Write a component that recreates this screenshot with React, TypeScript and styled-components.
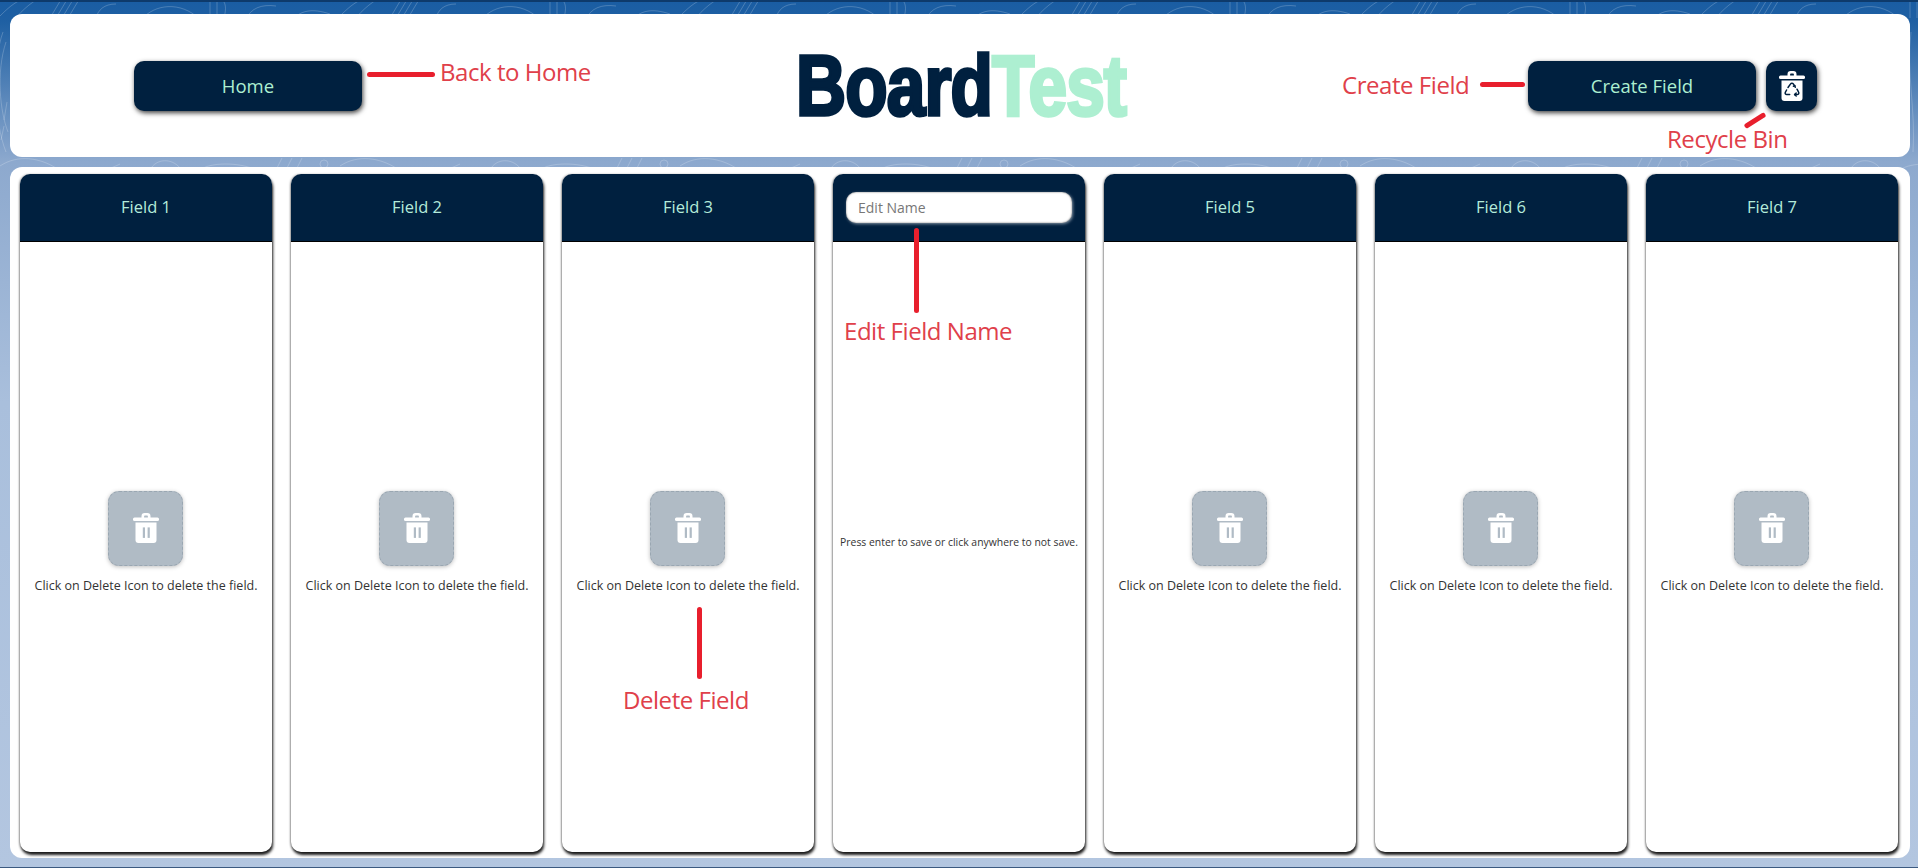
import React from "react";
import styled, { createGlobalStyle } from "styled-components";

const Global = createGlobalStyle`
  html, body { margin: 0; padding: 0; height: 100%; overflow: hidden; }
  body { font-family: "Open Sans", "Noto Sans", sans-serif; }
  * { box-sizing: border-box; }
`;

const Page = styled.div`
  position: relative;
  width: 1918px;
  height: 868px;
  padding: 14px 8px 9px 10px;
  display: flex;
  flex-direction: column;
  gap: 10px;
  overflow: hidden;
  background: linear-gradient(180deg, #1a5da3 0px, #1f60a3 20px, #8da9ce 160px, #a9bfdc 400px, #b3c6e0 867px);
  border-top: 2px solid #0e3a6b;
  border-bottom: 1px solid #3c5a80;
`;

const Topo = styled.svg`
  position: absolute;
  inset: 0;
  width: 100%;
  height: 100%;
  pointer-events: none;
`;

const Header = styled.header`
  position: relative;
  height: 143px;
  margin-top: -2px;
  flex: none;
  background: #fff;
  border-radius: 12px;
  display: grid;
  grid-template-columns: 1fr 329px 1fr;
  align-items: center;
`;

const HeaderLeft = styled.div`
  display: flex;
  padding-left: 124px;
`;

const HeaderRight = styled.div`
  display: flex;
  justify-content: flex-end;
  gap: 10px;
  padding-right: 93px;
`;

const NavButton = styled.button`
  width: 228px;
  height: 50px;
  border: none;
  border-radius: 10px;
  background: #00203f;
  color: #adefd1;
  font: 400 18.5px "Open Sans", sans-serif;
  padding-top: 1px;
  box-shadow: 1px 2px 5px rgba(0, 0, 0, 0.75);
`;

const BinButton = styled.button`
  width: 51px;
  height: 50px;
  border: none;
  border-radius: 10px;
  background: #00203f;
  display: grid;
  place-items: center;
  padding: 0;
  box-shadow: 1px 2px 5px rgba(0, 0, 0, 0.75);
`;

const Logo = styled.h1`
  margin: 0;
  font: 700 85px/1 "Liberation Sans", sans-serif;
  letter-spacing: -1px;
  white-space: nowrap;
  color: #00203f;
  -webkit-text-stroke: 3.5px currentColor;
  transform: scaleX(0.815);
  transform-origin: left center;
`;

const LogoAccent = styled.span`
  color: #adefd1;
`;

const Board = styled.main`
  position: relative;
  flex: 1;
  background: #fff;
  border-radius: 12px;
  padding: 7px 12px 6px 10px;
  display: grid;
  grid-template-columns: repeat(7, 1fr);
  column-gap: 19px;
`;

const Column = styled.section`
  display: flex;
  flex-direction: column;
  border-radius: 10px;
  background: #fff;
  overflow: hidden;
  box-shadow: 1px 3px 3px rgba(0, 0, 0, 0.9), -1px 0 2px rgba(0, 0, 0, 0.3);
`;

const ColumnHead = styled.div`
  height: 68px;
  flex: none;
  background: #00203f;
  border-bottom: 1px solid #000;
  color: #b4ebdb;
  font-size: 16.5px;
  display: flex;
  align-items: center;
  justify-content: center;
  padding-bottom: 2px;
`;

const NameInput = styled.input`
  width: 226px;
  height: 31px;
  margin-top: 2px;
  border: none;
  border-radius: 10px;
  padding: 0 12px;
  background: #fff;
  font: 400 14px "Open Sans", sans-serif;
  box-shadow: 1px 1px 3px rgba(255, 255, 255, 0.5), inset 0 0 2px rgba(0, 0, 0, 0.6);
  &::placeholder { color: #777; opacity: 1; }
`;

const ColumnBody = styled.div`
  flex: 1;
  display: flex;
  flex-direction: column;
  align-items: center;
  justify-content: center;
  gap: 11px;
  padding-bottom: 10px;
`;

const DeleteTile = styled.button`
  width: 75px;
  height: 75px;
  padding: 0;
  margin-right: 1px;
  border: 1px dashed #9aa7b2;
  border-radius: 11px;
  background: #b0bbc5;
  display: grid;
  place-items: center;
  box-shadow: 0 1px 4px rgba(0, 0, 0, 0.25);
`;

const Hint = styled.p<{ $small?: boolean }>`
  margin: 0;
  color: #333;
  white-space: nowrap;
  font-size: ${(p) => (p.$small ? "10.4px" : "12.5px")};
`;

const Note = styled.span`
  position: absolute;
  color: #e0404a;
  font: 400 24px/1 "Open Sans", sans-serif;
  letter-spacing: -0.45px;
  white-space: nowrap;
`;

const Stroke = styled.i`
  position: absolute;
  background: #e81f2d;
  border-radius: 3px;
`;

const TrashIcon = ({ recycle }: { recycle?: boolean }) => (
  <svg width="26" height="30" viewBox="0 0 26 30" fill="#fff">
    <path d="M8.5 5V3.2A3.2 3.2 0 0 1 11.7 0h2.6a3.2 3.2 0 0 1 3.2 3.2V5h-2.6V3.4a.8.8 0 0 0-.8-.8h-2.2a.8.8 0 0 0-.8.8V5z" />
    <rect x="0" y="4.6" width="26" height="3.4" rx="1.5" />
    <path d="M2.5 9.4h21V27a3 3 0 0 1-3 3h-15a3 3 0 0 1-3-3z" />
    {recycle ? (
      <g fill="none" stroke="#00203f" strokeWidth="1.5" strokeLinecap="round" strokeLinejoin="round">
        <path d="M9 16.5l2.6-3.6a1.6 1.6 0 0 1 2.7 0l1.2 1.8" />
        <path d="M14.4 15.2l1.5-.6.4 1.7" />
        <path d="M18 18.2l1.6 3a1.6 1.6 0 0 1-1.4 2.4h-2.4" />
        <path d="M17.2 22l-1.6 1.6 1.6 1.4" />
        <path d="M7.6 19l-1.3 2.3a1.6 1.6 0 0 0 1.4 2.3h3" />
      </g>
    ) : (
      <g fill="#b0bbc5">
        <rect x="9.8" y="14.4" width="2.2" height="10.5" />
        <rect x="14.6" y="14.4" width="2.2" height="10.5" />
      </g>
    )}
  </svg>
);

const names = ["Field 1", "Field 2", "Field 3", null, "Field 5", "Field 6", "Field 7"];

const contours = [
  "M0 14C12 2 22 -6 36 -4",
  "M12 20C24 6 34 -2 44 -6",
  "M50 16L62 -4M56 16L68 -4M62 16L74 -4M68 16L80 -4",
  "M96 16C98 8 104 2 116 2",
  "M140 20C150 4 176 -2 196 14",
  "M210 16V0M217 16V0M224 16C226 8 226 4 224 0M246 18C250 6 262 2 276 4",
  "M290 20C300 8 312 6 330 12",
  "M0 164C18 152 40 156 56 166S100 172 120 162",
  "M150 168C156 156 172 156 180 166",
  "M200 168C210 160 240 160 256 168",
  "M276 168L282 156M286 168L292 156M296 168L302 156",
  "M320 162a4 4 0 1 0 8 0a4 4 0 1 0-8 0",
];

const SideLines = [
  "M6 40C-4 70 0 110 8 130",
  "M3 30C-8 60 -6 120 6 150",
  "M7 100L4 118M4 124L1 138",
  "M1911 30C1906 70 1916 110 1913 150",
];

export default function App() {
  return (
    <Page>
      <Global />
      <Topo aria-hidden="true">
        <defs>
          <pattern id="topo" width="340" height="180" patternUnits="userSpaceOnUse">
            <g fill="none" stroke="#fff" strokeOpacity="0.2" strokeWidth="1">
              {contours.map((d) => (
                <path key={d} d={d} />
              ))}
            </g>
          </pattern>
        </defs>
        <rect x="0" y="0" width="1918" height="178" fill="url(#topo)" />
        <g fill="none" stroke="#fff" strokeOpacity="0.2" strokeWidth="1">
          {SideLines.map((d) => (
            <path key={d} d={d} />
          ))}
        </g>
      </Topo>
      <Header>
        <HeaderLeft>
          <NavButton>Home</NavButton>
        </HeaderLeft>
        <Logo>
          Board<LogoAccent>Test</LogoAccent>
        </Logo>
        <HeaderRight>
          <NavButton>Create Field</NavButton>
          <BinButton aria-label="Recycle bin">
            <TrashIcon recycle />
          </BinButton>
        </HeaderRight>
      </Header>
      <Board>
        {names.map((name, i) => (
          <Column key={i}>
            <ColumnHead>{name ?? <NameInput placeholder="Edit Name" />}</ColumnHead>
            <ColumnBody>
              {name ? (
                <>
                  <DeleteTile aria-label="Delete field">
                    <TrashIcon />
                  </DeleteTile>
                  <Hint>Click on Delete Icon to delete the field.</Hint>
                </>
              ) : (
                <Hint $small>Press enter to save or click anywhere to not save.</Hint>
              )}
            </ColumnBody>
          </Column>
        ))}
      </Board>
      <Stroke style={{ left: 367, top: 70, width: 68, height: 5 }} />
      <Note style={{ left: 440, top: 58 }}>Back to Home</Note>
      <Note style={{ left: 1342, top: 71 }}>Create Field</Note>
      <Stroke style={{ left: 1480, top: 80, width: 45, height: 5 }} />
      <Stroke style={{ left: 1743, top: 116, width: 24, height: 5, transform: "rotate(-32deg)" }} />
      <Note style={{ left: 1667, top: 125 }}>Recycle Bin</Note>
      <Stroke style={{ left: 914, top: 226, width: 5, height: 85 }} />
      <Note style={{ left: 844, top: 317 }}>Edit Field Name</Note>
      <Stroke style={{ left: 697, top: 605, width: 5, height: 72 }} />
      <Note style={{ left: 623, top: 686 }}>Delete Field</Note>
    </Page>
  );
}
